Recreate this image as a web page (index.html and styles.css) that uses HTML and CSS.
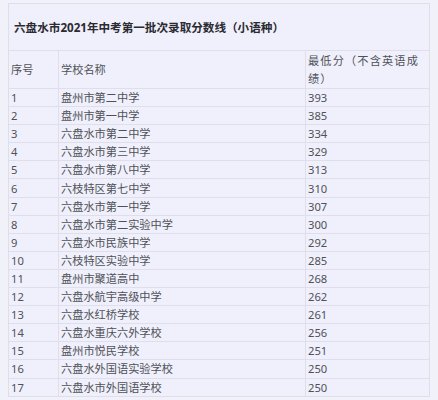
FILE: index.html
```html
<!DOCTYPE html>
<html lang="zh-CN">
<head>
<meta charset="utf-8">
<title>六盘水市2021年中考第一批次录取分数线（小语种）</title>
<link rel="stylesheet" href="styles.css">
</head>
<body>
<table class="score-table">
  <colgroup>
    <col class="col-no">
    <col class="col-name">
    <col class="col-score">
  </colgroup>
  <tr class="title-row"><td colspan="3">六盘水市2021年中考第一批次录取分数线（小语种）</td></tr>
  <tr class="head-row"><td>序号</td><td>学校名称</td><td class="wide">最低分（不含英语成绩）</td></tr>
  <tr><td>1</td><td>盘州市第二中学</td><td>393</td></tr>
  <tr><td>2</td><td>盘州市第一中学</td><td>385</td></tr>
  <tr><td>3</td><td>六盘水市第二中学</td><td>334</td></tr>
  <tr><td>4</td><td>六盘水市第三中学</td><td>329</td></tr>
  <tr><td>5</td><td>六盘水市第八中学</td><td>313</td></tr>
  <tr><td>6</td><td>六枝特区第七中学</td><td>310</td></tr>
  <tr><td>7</td><td>六盘水市第一中学</td><td>307</td></tr>
  <tr><td>8</td><td>六盘水市第二实验中学</td><td>300</td></tr>
  <tr><td>9</td><td>六盘水市民族中学</td><td>292</td></tr>
  <tr><td>10</td><td>六枝特区实验中学</td><td>285</td></tr>
  <tr><td>11</td><td>盘州市聚道高中</td><td>268</td></tr>
  <tr><td>12</td><td>六盘水航宇高级中学</td><td>262</td></tr>
  <tr><td>13</td><td>六盘水红桥学校</td><td>261</td></tr>
  <tr><td>14</td><td>六盘水重庆六外学校</td><td>256</td></tr>
  <tr><td>15</td><td>盘州市悦民学校</td><td>251</td></tr>
  <tr><td>16</td><td>六盘水外国语实验学校</td><td>250</td></tr>
  <tr><td>17</td><td>六盘水市外国语学校</td><td>250</td></tr>
</table>
</body>
</html>
```

FILE: styles.css
```css
html, body {
  margin: 0;
  padding: 0;
  background: #f1f1fa;
}
body {
  padding: 3px 0 0 8px;
  font-family: "Noto Sans", "Noto Sans CJK SC", sans-serif;
  color: #505058;
}
.score-table {
  border-collapse: collapse;
  table-layout: fixed;
  width: 421px;
  background: #eff0fb;
  font-size: 11.2px;
}
.col-no { width: 50px; }
.col-name { width: 247px; }
.col-score { width: 124px; }
.score-table td {
  border: 1px solid #dedfeb;
  padding: 0 2px;
  height: 18.1px;
  line-height: 17px;
  box-sizing: border-box;
  vertical-align: middle;
  white-space: normal;
}
.title-row td {
  height: 47px;
  padding-left: 5px;
  font-size: 11.6px;
  font-weight: bold;
  color: #2a2a30;
}
.head-row td {
  height: 38px;
  line-height: 18px;
}
.head-row .wide {
  letter-spacing: 1.15px;
}
```
